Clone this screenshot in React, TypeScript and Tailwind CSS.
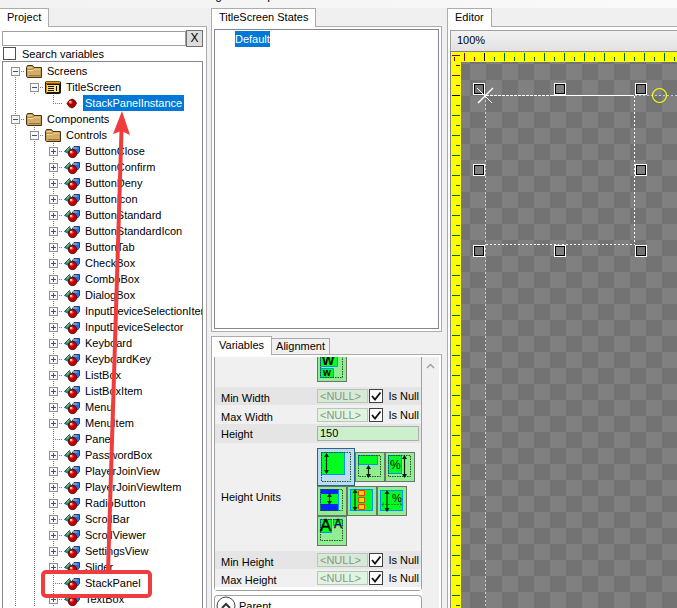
import React from "react";

type Guide = "none" | "line" | "plus" | "minus" | "minusFirst" | "tee" | "end";
type IconKind = "folder" | "screen" | "ball" | "component";
interface Row {
  label: string;
  guides: Guide[];
  icon: IconKind;
  selected?: boolean;
}

const controls = [
  "ButtonClose", "ButtonConfirm", "ButtonDeny", "ButtonIcon", "ButtonStandard", "ButtonStandardIcon",
  "ButtonTab", "CheckBox", "ComboBox", "DialogBox", "InputDeviceSelectionItem", "InputDeviceSelector",
  "Keyboard", "KeyboardKey", "ListBox", "ListBoxItem", "Menu", "MenuItem", "Panel", "PasswordBox",
  "PlayerJoinView", "PlayerJoinViewItem", "RadioButton", "ScrollBar", "ScrollViewer", "SettingsView",
  "Slider", "StackPanel", "TextBox",
];
const leaves = ["Panel", "StackPanel"];

const rows: Row[] = [
  { label: "Screens", guides: ["minusFirst"], icon: "folder" },
  { label: "TitleScreen", guides: ["line", "minusFirst"], icon: "screen" },
  { label: "StackPanelInstance", guides: ["line", "none", "end"], icon: "ball", selected: true },
  { label: "Components", guides: ["minus"], icon: "folder" },
  { label: "Controls", guides: ["line", "minus"], icon: "folder" },
  ...controls.map((label): Row => ({
    label,
    guides: ["line", "line", leaves.includes(label) ? "tee" : "plus"],
    icon: "component",
  })),
];

function GuideCell({ kind }: { kind: Guide }) {
  const box = kind === "plus" || kind === "minus" || kind === "minusFirst";
  return (
    <svg width="19" height="16" className="shrink-0" shapeRendering="crispEdges" aria-hidden="true">
      <g stroke="#777" strokeDasharray="1 1">
        {kind !== "none" && kind !== "minusFirst" && <path d={kind === "end" ? "M9.5 0V9" : "M9.5 0V16"} />}
        {kind === "minusFirst" && <path d="M9.5 12V16" />}
        {kind !== "none" && kind !== "line" && <path d="M9 8.5H19" />}
      </g>
      {box && (
        <>
          <rect x="5.5" y="4.5" width="8" height="8" fill="#f8f8f8" stroke="#919191" />
          <path d="M7 8.5H12" stroke="#3b4f96" />
          {kind === "plus" && <path d="M9.5 6V11" stroke="#3b4f96" />}
        </>
      )}
    </svg>
  );
}

function NodeIcon({ kind }: { kind: IconKind }) {
  return (
    <svg width="19" height="16" className="shrink-0" aria-hidden="true">
      {kind === "folder" && (
        <>
          <path d="M1.5 13.5V4.5L2.5 2.5H7.5L9 4.5H16.5V14.5H2.5Z" fill="#b98a45" stroke="#4a3413" />
          <path d="M2.5 5.5V3.8H7L8.4 5.5Z" fill="#e8cf8d" />
          <path d="M2.5 13V7.5H8L9.5 6H15.5V13.5H3Z" fill="#d3ae68" />
          <path d="M2.5 7.5H8L9.5 6H15.5" fill="none" stroke="#f3e0a8" />
          <path d="M4 12.5H15.5" stroke="#a5752f" />
        </>
      )}
      {kind === "screen" && (
        <>
          <rect x="1.5" y="2.5" width="15" height="12" rx="1" fill="#1b1509" stroke="#1b1509" />
          <path d="M2 3.5H16" stroke="#f09c22" strokeWidth="2" />
          <rect x="3" y="6" width="12" height="7" fill="#f8e08a" />
          <path d="M4 7.5H10M4 9.5H10M4 11.5H10M12.5 7V12" stroke="#1b1509" />
          <path d="M2.5 5V14" stroke="#d98a1c" />
        </>
      )}
      {kind === "ball" && (
        <>
          <path d="M4 8.5L6 5.5L9 4L12 5.5L13.500 8.500L11.500 11.500L9 13L6 11.500Z" fill="#b00000" stroke="#4a0000" strokeWidth="0.8" />
          <circle cx="7.6" cy="7.2" r="1.8" fill="#ff5050" />
          <circle cx="7.1" cy="6.700" r="0.8" fill="#fff" />
        </>
      )}
      {kind === "component" && (
        <>
          <path d="M1.5 8.5L6.5 3.5L8.5 8.5L6 10.5Z" fill="#1f9d70" stroke="#063d2a" strokeWidth="0.8" />
          <path d="M6.500 4.500L4 7.5" stroke="#7fe0ba" />
          <path d="M9.5 5.5L11 3.5H16.5V8.500L14.5 11H9.5Z" fill="#2c6fd6" stroke="#0b1f4d" strokeWidth="0.8" />
          <path d="M10 5H14.5" stroke="#8fd0f5" />
          <circle cx="9.5" cy="10.5" r="4.200" fill="#c00000" stroke="#4a0000" strokeWidth="0.8" />
          <circle cx="8.6" cy="9.4" r="1.8" fill="#f04444" />
          <circle cx="8.1" cy="8.9" r="0.9" fill="#fff" />
        </>
      )}
    </svg>
  );
}

function Tab({ children, active = true, first = false }: { children: React.ReactNode; active?: boolean; first?: boolean }) {
  return (
    <button
      type="button"
      className={
        "border-[#acacac] text-left whitespace-nowrap " +
        (active ? "relative z-10 -mb-px h-[19px] border-x border-t bg-white px-[7px] pb-0.5 " : "h-4 border-t border-r bg-[#f0f0f0] px-1 pb-0.5 ") +
        (first ? "border-l-0" : "")
      }
    >
      {children}
    </button>
  );
}

function ProjectPanel() {
  return (
    <section className="flex w-[207px] shrink-0 flex-col">
      <div className="flex items-end"><Tab first>Project</Tab></div>
      <div className="flex min-h-0 flex-1 flex-col border-t border-r border-[#acacac] bg-white pt-0.5 pr-[3px] pl-0.5">
        <div className="flex h-[18px] items-center">
          <input aria-label="Search" className="h-[15px] min-w-0 flex-1 border border-[#a0a0a0] bg-white px-1 outline-none" />
          <button type="button" className="h-[17px] w-[17px] border border-[#707070] bg-[#dddddd] text-xs leading-[15px]">X</button>
        </div>
        <label className="flex h-[14px] items-center gap-1.5 pb-px">
          <input type="checkbox" className="ml-px h-[13px] w-[13px] appearance-none border border-[#505050] bg-white" />
          Search variables
        </label>
        <ul className="min-h-0 flex-1 overflow-hidden border border-b-0 border-[#828790] pt-px pl-[3px]">
          {rows.map((row) => (
            <li key={row.label} className="flex h-4 items-center whitespace-nowrap">
              {row.guides.map((g, i) => <GuideCell key={i} kind={g} />)}
              <NodeIcon kind={row.icon} />
              <span className={"ml-px h-4 px-0.5 leading-4 " + (row.selected ? "bg-[#0078d7] text-white" : "")}>{row.label}</span>
            </li>
          ))}
        </ul>
      </div>
    </section>
  );
}

function NullField({ label, shaded, tall }: { label: string; shaded?: boolean; tall?: boolean }) {
  return (
    <div className={"flex items-center pl-[6px] " + (shaded ? "bg-[#e5e5e5] " : "") + (tall ? "h-[19px]" : "h-[18px]")}>
      <span className="w-24 pt-1">{label}</span>
      <input
        aria-label={label}
        disabled
        value="<NULL>"
        className={"h-[14px] min-w-0 flex-1 border border-[#bcc4bc] pl-0.5 text-[#8a948a] " + (shaded ? "bg-[#d6ead6]" : "bg-[#e0f5e0]")}
      />
      <label className="flex items-center">
        <span className="ml-px grid">
          <input type="checkbox" defaultChecked className="col-start-1 row-start-1 h-[14px] w-[14px] appearance-none border border-[#404040] bg-white" />
          <svg width="14" height="14" className="pointer-events-none col-start-1 row-start-1" aria-hidden="true">
            <path d="M3 7L6 10.5L11.5 3.5" fill="none" stroke="#111" strokeWidth="1.8" />
          </svg>
        </span>
        <span className="pr-0.5 pl-[5px] whitespace-nowrap">Is Null</span>
      </label>
    </div>
  );
}

const arrowV = (x: number, y1: number, y2: number) => (
  <g stroke="#06210a" fill="#06210a">
    <path d={`M${x} ${y1 + 2}V${y2 - 2}`} strokeWidth="1.2" />
    <path d={`M${x} ${y1}l2.5 4h-5zM${x} ${y2}l2.5 -4h-5z`} stroke="none" />
  </g>
);

const dashBox = (x: number, y: number, w: number, h: number) => (
  <rect x={x} y={y} width={w} height={h} fill="none" stroke="#24502a" strokeDasharray="1.5 1" />
);

function UnitButton({ name, selected, children }: { name: string; selected?: boolean; children: React.ReactNode }) {
  return (
    <button
      type="button"
      aria-label={name}
      className={
        "grid shrink-0 place-items-center border " +
        (selected ? "h-[38px] w-[38px] border-[#2c628b] bg-[#bcdcf0]" : "h-[30px] w-[30px] border-[#6c746c] bg-[#90ee90]")
      }
    >
      <svg
        className={selected ? "h-9 w-9" : "h-7 w-7"}
        viewBox={selected ? "1 1 36 36" : "1 1 28 28"}
        fontFamily="Liberation Sans, sans-serif"
        aria-hidden="true"
      >
        {children}
      </svg>
    </button>
  );
}

function HeightUnits() {
  return (
    <div className="flex h-[108px] items-center pl-[6px]">
      <span className="w-24">Height Units</span>
      <div className="flex flex-col">
        <div className="flex items-center">
          <UnitButton name="Absolute" selected>
            <rect x="4.5" y="4.5" width="23" height="22" fill="#00ff21" stroke="#0094ff" />
            {dashBox(4.5, 4.5, 29, 29)}
            {arrowV(9.5, 5, 26)}
          </UnitButton>
          <UnitButton name="Relative to parent">
            <rect x="3.5" y="3.5" width="19" height="9" fill="#00ff21" stroke="#0094ff" />
            {dashBox(3.5, 3.5, 22, 21)}
            {arrowV(13.5, 13, 26)}
          </UnitButton>
          <UnitButton name="Percentage of parent">
            <rect x="3.5" y="3.5" width="13" height="18" fill="#00ff21" stroke="#0094ff" />
            {dashBox(3.5, 3.5, 22, 21)}
            <text x="5" y="17" fontSize="12">%</text>
            {arrowV(19.5, 3, 26)}
          </UnitButton>
        </div>
        <div className="flex items-center">
          <UnitButton name="Relative to children">
            <rect x="3.5" y="3.5" width="18" height="21" fill="#00ff21" stroke="#0094ff" />
            <path d="M4 3h17v5H4zM4 18h17v7H4z" fill="#0026ff" />
            {dashBox(3.5, 3.5, 22, 21)}
            {arrowV(12.5, 7, 19)}
          </UnitButton>
          <UnitButton name="Ratio of container">
            <rect x="3.5" y="3.5" width="22" height="21" fill="#00ff21" stroke="#0094ff" />
            <path d="M11.5 4.5h6v5h-6zM11.5 11.5h6v5h-6zM11.5 18.5h6v5h-6z" fill="#ffd800" stroke="#ff3300" />
            {arrowV(8, 3, 25)}
          </UnitButton>
          <UnitButton name="Percentage of width">
            <rect x="3.5" y="4.5" width="22" height="20" fill="#00ff21" stroke="#0094ff" />
            <path d="M5 18.5H25M7 16.5L4.5 18.5L7 20.5M22.5 16.5L25 18.5L22.5 20.5" fill="none" stroke="#12902a" strokeDasharray="2 1" />
            <text x="15" y="16" fontSize="11">%</text>
            {arrowV(10, 4, 26)}
          </UnitButton>
        </div>
        <div className="flex items-center">
          <UnitButton name="Font scale">
            <path d="M3.5 3.5h11v13h-11zM16.5 3.5h9v6h-9z" fill="#00ff21" stroke="#0094ff" />
            {dashBox(3.5, 3.5, 22, 21)}
            <text x="3" y="15" fontSize="17" stroke="#000" strokeWidth="0.4">A</text>
            <text x="17" y="12" fontSize="12" stroke="#000" strokeWidth="0.3">A</text>
          </UnitButton>
        </div>
      </div>
    </div>
  );
}

function MiddleColumn() {
  return (
    <div className="ml-1 flex w-[231px] shrink-0 flex-col">
      <section className="flex h-[324px] shrink-0 flex-col">
        <div className="flex items-end"><Tab>TitleScreen States</Tab></div>
        <div className="flex flex-1 border border-[#acacac] bg-white p-0.5">
          <div className="flex-1 border border-[#828790] pt-px pl-5">
            <span className="inline-block h-4 bg-[#0078d7] leading-4 text-white">Default</span>
          </div>
        </div>
      </section>
      <section className="mt-1 flex min-h-0 flex-1 flex-col">
        <div className="flex items-end"><Tab>Variables</Tab><Tab active={false}>Alignment</Tab></div>
        <div className="flex min-h-0 flex-1 border border-b-0 border-[#acacac] bg-white px-0.5 pt-0.5">
          <div className="flex min-w-0 flex-1 flex-col gap-1 overflow-hidden">
            <div className="rounded-b-sm border border-t-0 border-[#a0a0a0] bg-[#f0f0f0]">
              <div className="h-[30px] pl-[102px]">
                <div className="flex h-[25px] flex-col justify-end overflow-hidden">
                  <UnitButton name="Width font scale">
                    <path d="M3.5 1.5h17v13h-17zM3.5 16.5h13v9h-13z" fill="#00ff21" stroke="#0094ff" />
                    {dashBox(3.5, 3.5, 22, 22)}
                    <text x="5" y="13" fontSize="13" fontWeight="bold">W</text>
                    <text x="6" y="24" fontSize="10" fontWeight="bold">w</text>
                  </UnitButton>
                </div>
              </div>
              <NullField label="Min Width" shaded />
              <NullField label="Max Width" tall />
              <div className="flex h-[19px] items-center bg-[#e5e5e5] pr-0.5 pl-[6px]">
                <label htmlFor="height" className="w-24 pt-px">Height</label>
                <input id="height" defaultValue="150" className="h-[15px] min-w-0 flex-1 border border-[#abadb3] bg-[#ccf0cc] pb-px pl-0.5" />
              </div>
              <HeightUnits />
              <NullField label="Min Height" shaded />
              <NullField label="Max Height" />
              <div className="h-[3px] bg-white" />
            </div>
            <div className="flex flex-1 items-start rounded-t-sm border border-b-0 border-[#a0a0a0]">
              <button type="button" className="flex items-center gap-[3px] pl-px whitespace-nowrap">
                <svg width="20" height="20" aria-hidden="true">
                  <circle cx="10" cy="10" r="9" fill="#fff" stroke="#444" />
                  <path d="M6 12L10 8L14 12" fill="none" stroke="#333" strokeWidth="2" />
                </svg>
                Parent
              </button>
            </div>
          </div>
          <div className="w-[17px] bg-[#f0f0f0] pt-1.5 pl-1">
            <svg width="9" height="7" aria-hidden="true"><path d="M1 5L4.5 1.5L8 5" fill="none" stroke="#a0a0a0" strokeWidth="1.5" /></svg>
          </div>
        </div>
      </section>
    </div>
  );
}

const handleXs = [22, 103, 184];
const handleYs = [32, 113, 194];
const marks = Array.from({ length: 180 }, (_, i) => i);

/* Canvas units are pixels, the origin of the edited screen sits at (34, 43). */
function Canvas() {
  return (
    <svg className="min-h-0 w-full flex-1 border-t border-l border-[#808080]" shapeRendering="crispEdges" role="img" aria-label="Editor canvas">
      <defs>
        <pattern id="checker" x="19" y="12" width="32" height="32" patternUnits="userSpaceOnUse">
          <rect width="32" height="32" fill="#737373" />
          <path d="M0 0h16v16H0zM16 16h16v16H16z" fill="#808080" />
        </pattern>
      </defs>
      <rect width="100%" height="100%" fill="url(#checker)" />
      <path d="M183.5 43.5V192.5H34" fill="none" stroke="#fff" strokeDasharray="2 2" />
      <path d="M34.5 43.5H100" stroke="#fff" strokeDasharray="3 1" />
      <path d="M100 43.5H183" stroke="#fff" />
      <path d="M34.5 44V3000M184 43.5H3000" stroke="#add8e6" strokeDasharray="2 2" />
      <rect width="100%" height="10" fill="#ff0" />
      <rect width="10" height="100%" fill="#ff0" />
      {marks.map((i) => {
        const at = 3 + i * 10;
        const long = i % 2 === 1;
        const color = i < 3 ? "#8b0000" : i === 3 ? "#000" : "#006400";
        return <path key={"h" + i} d={long ? `M${at}.5 1V9` : `M${at}.5 5V9`} stroke={color} />;
      })}
      {marks.map((i) => {
        const at = 3 + i * 10;
        const long = i % 2 === 0;
        const color = i < 4 ? "#8b0000" : i === 4 ? "#000" : "#006400";
        return <path key={"v" + i} d={long ? `M1 ${at}.5H9` : `M5 ${at}.5H9`} stroke={color} />;
      })}
      {handleYs.flatMap((y) =>
        handleXs.filter((x) => !(x === 103 && y === 113)).map((x) => (
          <g key={x + "-" + y} fill="none">
            <rect x={x + 0.5} y={y - 0.5} width="11" height="11" stroke="#fff" />
            <rect x={x + 1.5} y={y + 0.5} width="9" height="9" stroke="#000" />
          </g>
        ))
      )}
      <g shapeRendering="auto" fill="none">
        <path d="M26 36L41 51" stroke="#fff" strokeWidth="1" />
        <path d="M42 36L27 51" stroke="#fff" strokeWidth="1.5" />
        <circle cx="208.5" cy="43.5" r="7" stroke="#ff0" strokeWidth="1.2" />
      </g>
    </svg>
  );
}

function EditorPanel() {
  return (
    <section className="ml-[5px] flex min-w-0 flex-1 flex-col">
      <div className="flex items-end"><Tab>Editor</Tab></div>
      <div className="flex min-h-0 flex-1 flex-col border-t border-l border-[#acacac] bg-white pt-[3px] pl-0.5">
        <div className="flex h-[21px] shrink-0 items-center border-t border-l border-[#a0a0a0] bg-linear-to-b from-[#f2f2f2] to-[#e2e2e2] pb-0.5 pl-[6px]">100%</div>
        <Canvas />
      </div>
    </section>
  );
}

export default function App() {
  return (
    <div className="relative flex h-screen flex-col overflow-hidden bg-[#f0f0f0] font-['Liberation_Sans',Arial,sans-serif] text-[11px] leading-[14px] text-black">
      <nav className="flex h-2 shrink-0 items-end gap-3 overflow-hidden bg-linear-to-r from-[#f2f2f2] to-[#fafafa] pb-1.5 pl-[198px] text-xs leading-[14px]">
        <span>Plugins</span>
        <span>Help</span>
      </nav>
      <main className="flex min-h-0 flex-1">
        <ProjectPanel />
        <MiddleColumn />
        <EditorPanel />
      </main>
      <svg width="160" height="600" className="pointer-events-none absolute top-0 left-0" aria-hidden="true">
        <path d="M121.5 130L108 572" fill="none" stroke="#f03c3c" strokeWidth="4" />
        <path d="M122 111L130 135L121.5 131L113 134Z" fill="#f03c3c" />
        <rect x="43" y="572" width="107" height="24" rx="3" fill="none" stroke="#f03c3c" strokeWidth="4" />
      </svg>
    </div>
  );
}
